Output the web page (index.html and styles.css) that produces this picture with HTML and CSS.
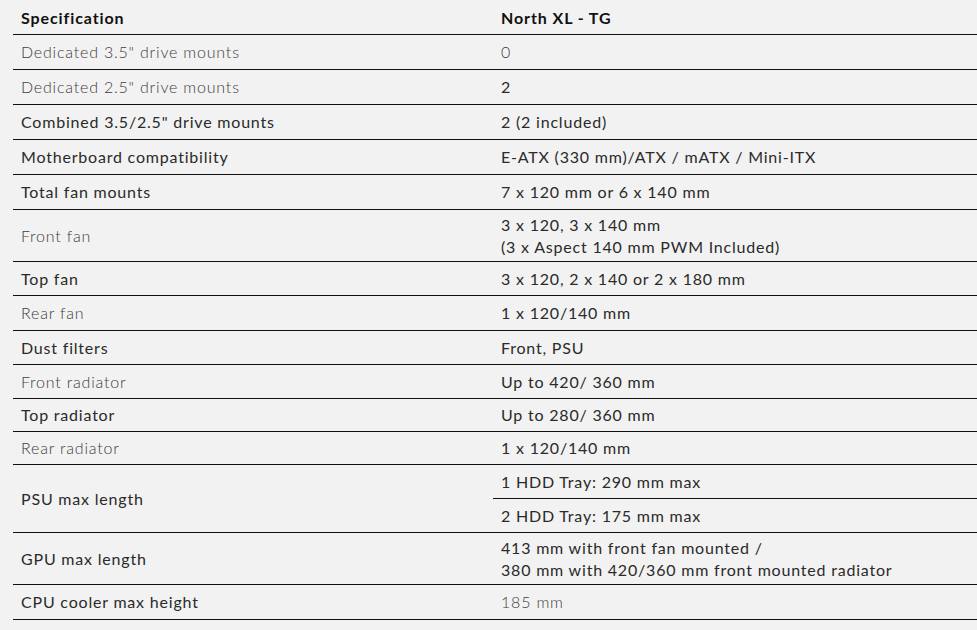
FILE: index.html
```html
<!DOCTYPE html>
<html lang="en">
<head>
<meta charset="utf-8">
<title>Specification</title>
<link rel="stylesheet" href="styles.css">
</head>
<body>
<table class="spec">
  <thead>
    <tr class="h33">
      <th class="col-name">Specification</th>
      <th>North XL - TG</th>
    </tr>
  </thead>
  <tbody>
    <tr class="h34"><td class="lt">Dedicated 3.5" drive mounts</td><td class="lt">0</td></tr>
    <tr class="h34"><td class="lt">Dedicated 2.5" drive mounts</td><td>2</td></tr>
    <tr class="h34"><td>Combined 3.5/2.5" drive mounts</td><td>2 (2 included)</td></tr>
    <tr class="h34"><td>Motherboard compatibility</td><td>E-ATX (330 mm)/ATX / mATX / Mini-ITX</td></tr>
    <tr class="h34"><td>Total fan mounts</td><td>7 x 120 mm or 6 x 140 mm</td></tr>
    <tr class="h51"><td class="lt">Front fan</td><td>3 x 120, 3 x 140 mm<br>(3 x Aspect 140 mm PWM Included)</td></tr>
    <tr class="h33"><td>Top fan</td><td>3 x 120, 2 x 140 or 2 x 180 mm</td></tr>
    <tr class="h34"><td class="lt">Rear fan</td><td>1 x 120/140 mm</td></tr>
    <tr class="h33"><td>Dust filters</td><td>Front, PSU</td></tr>
    <tr class="h33"><td class="lt">Front radiator</td><td>Up to 420/ 360 mm</td></tr>
    <tr class="h32"><td>Top radiator</td><td>Up to 280/ 360 mm</td></tr>
    <tr class="h32"><td class="lt">Rear radiator</td><td>1 x 120/140 mm</td></tr>
    <tr class="h33"><td rowspan="2">PSU max length</td><td>1 HDD Tray: 290 mm max</td></tr>
    <tr class="h33"><td>2 HDD Tray: 175 mm max</td></tr>
    <tr class="h51"><td>GPU max length</td><td>413 mm with front fan mounted /<br>380 mm with 420/360 mm front mounted radiator</td></tr>
    <tr class="h34"><td>CPU cooler max height</td><td class="lt">185 mm</td></tr>
  </tbody>
</table>
</body>
</html>
```

FILE: styles.css
```css
html, body {
  margin: 0;
  padding: 0;
  background: #f2f2f2;
}

body {
  font-family: Lato, "Open Sans", sans-serif;
  color: #2a2a2a;
  overflow: hidden;
}

.spec {
  margin-left: 13px;
  width: 980px;
  border-collapse: collapse;
  table-layout: fixed;
}

.spec th,
.spec td {
  text-align: left;
  vertical-align: middle;
  padding: 1px 8px 0;
  font-size: 16px;
  line-height: 22px;
  border-bottom: 1px solid #111;
  letter-spacing: 0.8px;
}

.spec .col-name {
  width: 464px;
}

.spec th {
  padding-top: 3px;
  font-weight: 700;
  color: #111;
  letter-spacing: 0.9px;
}

.spec td {
  font-weight: 400;
  color: #2a2a2a;
}

.spec td.lt {
  font-weight: 300;
  color: #3c3c3c;
}

.h34 { height: 35px; }
.h33 { height: 34px; }
.h32 { height: 33px; }
.h51 { height: 52px; }
```
